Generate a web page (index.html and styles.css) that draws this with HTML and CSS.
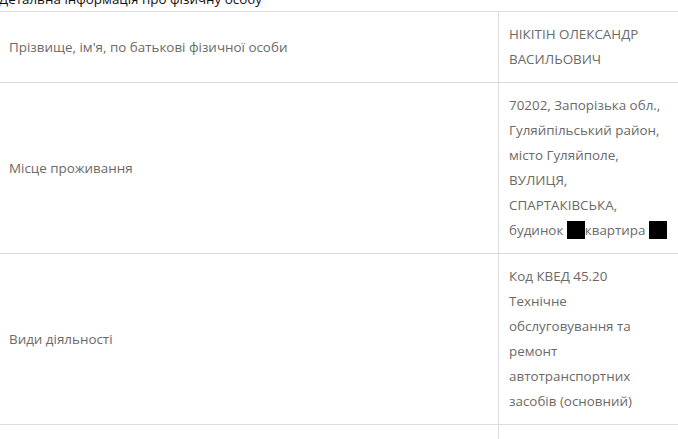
FILE: index.html
```html
<!DOCTYPE html>
<html lang="uk">
<head>
<meta charset="utf-8">
<link rel="stylesheet" href="styles.css">
</head>
<body>
<div class="page">
  <h3 class="title">Детальна інформація про фізичну особу</h3>
  <table class="info">
    <tr>
      <td class="label">Прізвище, ім'я, по батькові фізичної особи</td>
      <td class="value">НІКІТІН ОЛЕКСАНДР<br>ВАСИЛЬОВИЧ</td>
    </tr>
    <tr>
      <td class="label">Місце проживання</td>
      <td class="value">70202, Запорізька обл.,<br>Гуляйпільський район,<br>місто Гуляйполе,<br>ВУЛИЦЯ,<br>СПАРТАКІВСЬКА,<br>будинок <span class="redact"></span>квартира <span class="redact"></span></td>
    </tr>
    <tr>
      <td class="label">Види діяльності</td>
      <td class="value">Код КВЕД 45.20<br>Технічне<br>обслуговування та<br>ремонт<br>автотранспортних<br>засобів (основний)</td>
    </tr>
    <tr>
      <td class="label"></td>
      <td class="value"></td>
    </tr>
  </table>
</div>
</body>
</html>
```
FILE: styles.css
```css
html, body {
  margin: 0;
  padding: 0;
  background: #fff;
  overflow: hidden;
}
.page {
  width: 678px;
  font-family: "Open Sans", "Noto Sans", sans-serif;
}
.title {
  margin: -11px 0 0 -1px;
  height: 22px;
  font-size: 13.4px;
  font-weight: normal;
  line-height: 20px;
  color: #111;
}
.info {
  width: 678px;
  border-collapse: collapse;
  font-size: 13.4px;
  color: #6c6a68;
}
.info td {
  border-top: 1px solid #dcdcdc;
  border-bottom: 1px solid #dcdcdc;
  line-height: 25px;
  vertical-align: middle;
}
.label {
  width: 489px;
  padding: 10px 0 10px 9px;
  border-right: 1px solid #dcdcdc;
}
.value {
  padding: 10px 0 10px 10px;
  white-space: nowrap;
}
.redact {
  display: inline-block;
  width: 18px;
  height: 18px;
  background: #000;
  vertical-align: -4px;
}
```
